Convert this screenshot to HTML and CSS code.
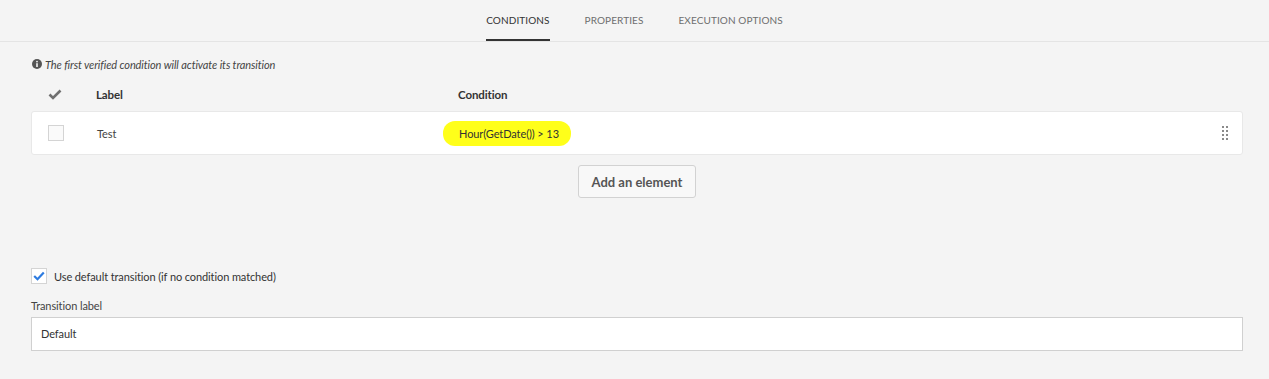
FILE: index.html
```html
<!DOCTYPE html>
<html lang="en">
<head>
    <meta charset="UTF-8">
    <title>conditions</title>
    <link rel="stylesheet" href="styles.css">
</head>
<body>
    <nav class="tabs">
        <a class="tab active">CONDITIONS</a>
        <a class="tab">PROPERTIES</a>
        <a class="tab">EXECUTION OPTIONS</a>
    </nav>

    <main class="panel">
        <p class="hint">
            <svg class="info" viewBox="0 0 10 10" width="10" height="10">
                <circle cx="5" cy="5" r="5" fill="#555"/>
                <rect x="4.2" y="4.2" width="1.6" height="3.8" fill="#f4f4f4"/>
                <circle cx="5" cy="2.6" r="0.9" fill="#f4f4f4"/>
            </svg>
            The first verified condition will activate its transition
        </p>

        <div class="grid-head">
            <span class="col-check">
                <svg viewBox="0 0 14 11" width="14" height="11">
                    <path d="M1.5 5.5 L5 9 L12.5 1.5" fill="none" stroke="#707070" stroke-width="2.6"/>
                </svg>
            </span>
            <span class="col-label">Label</span>
            <span class="col-cond">Condition</span>
        </div>

        <div class="grid-row">
            <span class="col-check"><span class="box"></span></span>
            <span class="col-label">Test</span>
            <span class="col-cond"><mark class="hl">Hour(GetDate()) &gt; 13</mark></span>
            <span class="handle">
                <i></i><i></i><i></i><i></i><i></i><i></i><i></i><i></i>
            </span>
        </div>

        <div class="add">
            <button class="add-btn">Add an element</button>
        </div>

        <label class="check-line">
            <span class="box checked">
                <svg viewBox="0 0 12 10" width="12" height="10">
                    <path d="M1.2 5 L4.5 8.2 L10.8 1.5" fill="none" stroke="#2d7be0" stroke-width="2.2"/>
                </svg>
            </span>
            Use default transition (if no condition matched)
        </label>

        <div class="field">
            <div class="field-label">Transition label</div>
            <div class="input">Default</div>
        </div>
    </main>
</body>
</html>
```

FILE: styles.css
```css
*{
    margin: 0;
    padding: 0;
    box-sizing: border-box;
}
body{
    background-color: #f4f4f4;
    font-family: Lato, "Open Sans", sans-serif;
    color: #333;
    font-size: 11px;
    letter-spacing: -0.1px;
}
.tabs{
    height: 42px;
    display: flex;
    justify-content: center;
    gap: 35px;
    border-bottom: 1px solid #e4e4e4;
}
.tab{
    font-size: 10px;
    letter-spacing: 0.1px;
    color: #6e6e6e;
    line-height: 40px;
    border-bottom: 2px solid transparent;
    height: 41px;
}
.tab.active{
    color: #333;
    border-bottom-color: #333;
}
.panel{
    padding: 14px 26px 0 31px;
}
.hint{
    font-size: 11px;
    font-style: italic;
    color: #444;
    display: flex;
    align-items: center;
    gap: 3px;
    height: 16px;
}
.info{
    margin-left: 1px;
}
.grid-head, .grid-row{
    display: flex;
    align-items: center;
}
.grid-head{
    height: 34px;
    margin-top: 5px;
    font-weight: 700;
    font-size: 11.5px;
}
.grid-row{
    height: 44px;
    background-color: #fff;
    border: 1px solid #e8e8e8;
    border-radius: 3px;
}
.col-check{
    width: 48px;
    display: flex;
    justify-content: center;
}
.col-label{
    width: 379px;
    padding-left: 17px;
}
.col-cond{
    flex: 1;
}
.grid-row .col-label, .grid-row .col-cond{
    font-size: 11px;
    color: #444;
}
.box{
    width: 16px;
    height: 16px;
    border: 1px solid #d4d4d4;
    background-color: #fafafa;
    display: inline-flex;
    align-items: center;
    justify-content: center;
}
.hl{
    background-color: #ffff1a;
    color: #333;
    padding: 6px 12px 6px 16px;
    margin-left: -16px;
    border-radius: 12px;
}
.handle{
    width: 6px;
    display: grid;
    grid-template-columns: repeat(2, 2px);
    gap: 2px;
    margin-right: 14px;
}
.handle i{
    width: 2px;
    height: 2px;
    background-color: #8a8a8a;
}
.add{
    display: flex;
    justify-content: center;
    padding-top: 10px;
}
.add-btn{
    font-family: Lato, "Open Sans", sans-serif;
    font-size: 13px;
    font-weight: 700;
    color: #555;
    background-color: #f8f8f8;
    border: 1px solid #d2d2d2;
    border-radius: 3px;
    width: 118px;
    height: 33px;
}
.check-line{
    display: flex;
    align-items: center;
    gap: 7px;
    margin-top: 70px;
    font-size: 11px;
    color: #333;
}
.box.checked{
    background-color: #fff;
}
.field{
    margin-top: 15px;
}
.field-label{
    font-size: 11px;
    color: #444;
    margin-bottom: 3px;
    height: 15px;
}
.input{
    height: 34px;
    background-color: #fff;
    border: 1px solid #d0d0d0;
    padding: 0 9px;
    line-height: 32px;
    font-size: 11px;
    color: #333;
}
```
